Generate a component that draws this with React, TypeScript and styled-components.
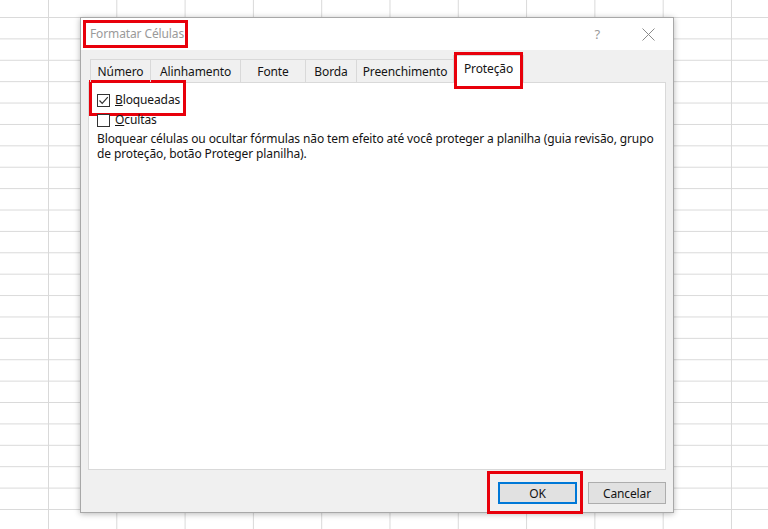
import styled, { createGlobalStyle } from "styled-components";

const GlobalStyle = createGlobalStyle`
  html, body {
    margin: 0;
    padding: 0;
  }
  body {
    font-family: "Noto Sans", "Open Sans", sans-serif;
    font-size: 12px;
    letter-spacing: -0.12px;
    color: #141414;
  }
`;

const tabs = [
  { label: "Número", width: 60 },
  { label: "Alinhamento", width: 90 },
  { label: "Fonte", width: 65 },
  { label: "Borda", width: 51 },
  { label: "Preenchimento", width: 97 },
];

function CloseIcon() {
  return (
    <svg width="13" height="13" viewBox="0 0 13 13">
      <path d="M0.5 0.5 L12.5 12.5 M12.5 0.5 L0.5 12.5" stroke="#8a8a8a" strokeWidth="1" fill="none" />
    </svg>
  );
}

function CheckMark() {
  return (
    <svg width="11" height="11" viewBox="0 0 11 11">
      <path d="M1.5 5.5 L4.2 8.3 L9.8 2.2" stroke="#333" strokeWidth="1.2" fill="none" />
    </svg>
  );
}

function App() {
  return (
    <>
      <GlobalStyle />
      <StyledSheet>
        <StyledDialog>
          <StyledTitleBar>
            <StyledTitle>Formatar Células</StyledTitle>
            <StyledTitleButtons>
              <StyledHelp>?</StyledHelp>
              <CloseIcon />
            </StyledTitleButtons>
          </StyledTitleBar>

          <StyledBody>
            <StyledTabs>
              {tabs.map((tab) => (
                <StyledTab key={tab.label} $width={tab.width}>
                  {tab.label}
                </StyledTab>
              ))}
              <StyledActiveTab>Proteção</StyledActiveTab>
            </StyledTabs>

            <StyledPanel>
              <StyledOption $marked>
                <StyledBox>
                  <CheckMark />
                </StyledBox>
                <span>
                  <u>B</u>loqueadas
                </span>
              </StyledOption>
              <StyledOption>
                <StyledBox />
                <span>
                  <u>O</u>cultas
                </span>
              </StyledOption>
              <StyledNote>
                Bloquear células ou ocultar fórmulas não tem efeito até você proteger a planilha (guia revisão, grupo
                de proteção, botão Proteger planilha).
              </StyledNote>
            </StyledPanel>

            <StyledFooter>
              <StyledButton $primary>OK</StyledButton>
              <StyledButton>Cancelar</StyledButton>
            </StyledFooter>
          </StyledBody>
        </StyledDialog>
      </StyledSheet>
    </>
  );
}

export default App;

const StyledSheet = styled.div`
  box-sizing: border-box;
  width: 768px;
  height: 529px;
  overflow: hidden;
  padding: 17px 0 0 80px;
  background-color: #ffffff;
  background-image: linear-gradient(to right, #d9d9d9 1px, transparent 1px),
    linear-gradient(to bottom, #d9d9d9 1px, transparent 1px);
  background-size: 68.3px 100%, 100% 21.4px;
  background-position: 48px 0, 0 17px;
`;

const StyledDialog = styled.div`
  box-sizing: border-box;
  width: 594px;
  height: 496px;
  display: flex;
  flex-direction: column;
  background: #f0f0f0;
  border: 1px solid #a8a8a8;
  box-shadow: 0 1px 6px rgba(0, 0, 0, 0.28);
`;

const StyledTitleBar = styled.div`
  height: 32px;
  display: flex;
  align-items: center;
  justify-content: space-between;
  padding: 0 18px 0 9px;
  background: #ffffff;
`;

const StyledTitle = styled.span`
  position: relative;
  color: #9a9a9a;
  font-size: 12px;
  line-height: 16px;

  &::after {
    content: "";
    position: absolute;
    top: -6px;
    bottom: -6px;
    left: -7px;
    right: -4px;
    border: 3px solid #e8000b;
  }
`;

const StyledTitleButtons = styled.div`
  display: flex;
  align-items: center;
  gap: 42px;
`;

const StyledHelp = styled.span`
  color: #9a9a9a;
  font-size: 13px;
`;

const StyledBody = styled.div`
  flex: 1;
  display: flex;
  flex-direction: column;
  padding: 9px 7px 0;
`;

const StyledTabs = styled.div`
  display: flex;
  align-items: flex-end;
  height: 23px;
  padding-left: 2px;
  position: relative;
  z-index: 1;
`;

const StyledTab = styled.div<{ $width: number }>`
  box-sizing: border-box;
  width: ${({ $width }) => $width}px;
  height: 23px;
  display: flex;
  align-items: center;
  justify-content: center;
  border-top: 1px solid #d9d9d9;
  border-left: 1px solid #d9d9d9;
  color: #141414;
`;

const StyledActiveTab = styled.div`
  position: relative;
  box-sizing: border-box;
  width: 71px;
  height: 28px;
  margin-bottom: -1px;
  display: flex;
  align-items: center;
  justify-content: center;
  padding-bottom: 2px;
  background: #ffffff;
  border: 1px solid #d9d9d9;
  border-bottom: none;

  &::after {
    content: "";
    position: absolute;
    top: -4px;
    bottom: -6px;
    left: 0;
    right: 0;
    border: 3px solid #e8000b;
  }
`;

const StyledPanel = styled.div`
  box-sizing: border-box;
  height: 388px;
  padding: 7px 8px 0;
  background: #ffffff;
  border: 1px solid #d9d9d9;
`;

const StyledOption = styled.label<{ $marked?: boolean }>`
  position: relative;
  display: flex;
  align-items: center;
  gap: 5px;
  width: fit-content;
  height: 20px;
  line-height: 20px;

  &::after {
    content: "";
    display: ${({ $marked }) => ($marked ? "block" : "none")};
    position: absolute;
    top: -10px;
    bottom: -6px;
    left: -8px;
    right: -6px;
    border: 3px solid #e8000b;
  }
`;

const StyledBox = styled.span`
  box-sizing: border-box;
  width: 13px;
  height: 13px;
  display: flex;
  align-items: center;
  justify-content: center;
  border: 1px solid #333333;
  background: #ffffff;
`;

const StyledNote = styled.p`
  margin: 1px 0 0;
  line-height: 15px;
  width: 570px;
`;

const StyledFooter = styled.div`
  display: flex;
  justify-content: flex-end;
  gap: 11px;
  padding-top: 12px;
`;

const StyledButton = styled.button<{ $primary?: boolean }>`
  position: relative;
  box-sizing: border-box;
  width: ${({ $primary }) => ($primary ? "79px" : "78px")};
  height: 22px;
  font-family: inherit;
  font-size: 12px;
  letter-spacing: inherit;
  color: #141414;
  background: #e1e1e1;
  border: 1px solid ${({ $primary }) => ($primary ? "#0078d7" : "#adadad")};
  box-shadow: ${({ $primary }) => ($primary ? "inset 0 0 0 1px #0078d7" : "none")};
  padding: 0;

  &::after {
    content: "";
    display: ${({ $primary }) => ($primary ? "block" : "none")};
    position: absolute;
    top: -12px;
    bottom: -11px;
    left: -12px;
    right: -7px;
    border: 3px solid #e8000b;
  }
`;
